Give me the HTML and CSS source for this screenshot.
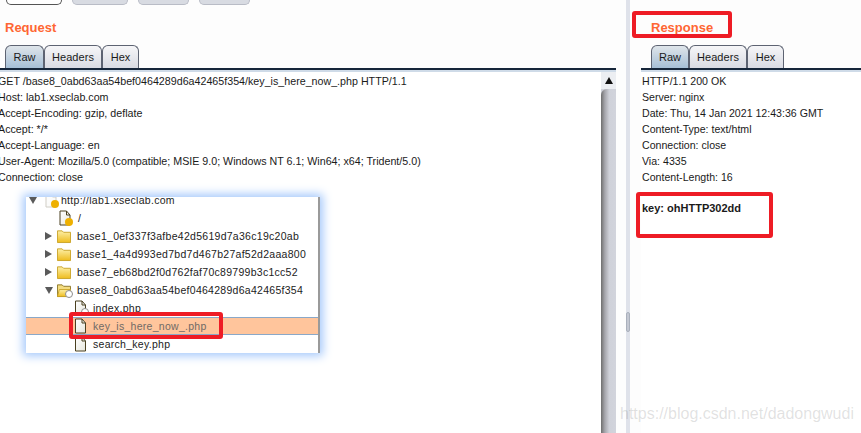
FILE: index.html
```html
<!DOCTYPE html>
<html lang="en">
<head>
<meta charset="utf-8">
<title>Request and Response</title>
<link rel="stylesheet" href="styles.css">
</head>
<body>
<svg class="defs" width="0" height="0" aria-hidden="true">
  <defs>
    <linearGradient id="fold" x1="0" y1="0" x2="0" y2="1"><stop offset="0" stop-color="#fdf0a8"/><stop offset="1" stop-color="#eebc1e"/></linearGradient>
    <linearGradient id="paper" x1="0" y1="0" x2="1" y2="1"><stop offset="0" stop-color="#ffffff"/><stop offset="1" stop-color="#e6e6dc"/></linearGradient>
    <symbol id="doc" viewBox="0 0 13 16"><path d="M1.5 1H8l3.5 4v10h-10z" fill="url(#paper)" stroke="#4a4020"/><path d="M8 1v4h3.5" fill="none" stroke="#4a4020"/></symbol>
    <symbol id="folder" viewBox="0 0 15 16"><path d="M.5 2.5h5l1.5 1.5h7.5v11H.5z" fill="url(#fold)" stroke="#c9a227"/></symbol>
    <symbol id="folder-open" viewBox="0 0 15 16"><path d="M.5 2.5h5l1.5 1.5h7.5v11H.5z" fill="#f4dc80" stroke="#8a7526"/><path d="M2.5 7.5h12v7.5H.5z" fill="url(#fold)" stroke="#c9a227"/></symbol>
  </defs>
</svg>
<div class="page">
  <section class="left">
    <div class="toolbar">
      <span class="tool tool-on w56"></span><span class="tool w56"></span><span class="tool w51"></span><span class="tool w51"></span>
    </div>
    <h2 class="title">Request</h2>
    <div class="tabs">
      <span class="tab tab-on w39">Raw</span><span class="tab w58">Headers</span><span class="tab w37">Hex</span>
    </div>
    <div class="editor">
      <pre class="code code-left">GET /base8_0abd63aa54bef0464289d6a42465f354/key_is_here_now_.php HTTP/1.1
Host: lab1.xseclab.com
Accept-Encoding: gzip, deflate
Accept: */*
Accept-Language: en
User-Agent: Mozilla/5.0 (compatible; MSIE 9.0; Windows NT 6.1; Win64; x64; Trident/5.0)
Connection: close</pre>
      <div class="scrollbar">
        <div class="scroll-btn"><span class="scroll-arrow"></span></div>
        <div class="scroll-thumb"></div>
      </div>
    </div>
  </section>
  <div class="split"><span class="split-grip"></span></div>
  <section class="right">
    <h2 class="title title-right">Response</h2>
    <div class="tabs tabs-right">
      <span class="tab tab-on w38">Raw</span><span class="tab w58">Headers</span><span class="tab w37">Hex</span>
    </div>
    <div class="editor">
      <pre class="code code-right">HTTP/1.1 200 OK
Server: nginx
Date: Thu, 14 Jan 2021 12:43:36 GMT
Content-Type: text/html
Connection: close
Via: 4335
Content-Length: 16

<b>key: ohHTTP302dd</b></pre>
    </div>
  </section>
</div>

<div class="tree">
  <div class="tree-list">
    <div class="row d0"><span class="arrow-down"></span><span class="host-icon"><svg class="i-doc" aria-hidden="true"><use href="#doc"/></svg><span class="dot"></span></span><span class="label-host">http://lab1.xseclab.com</span></div>
    <div class="row d1-leaf"><span class="host-icon"><svg class="i-doc solid" aria-hidden="true"><use href="#doc"/></svg><span class="dot"></span></span><span class="label">/</span></div>
    <div class="row d1"><span class="arrow-right"></span><svg class="i-folder" aria-hidden="true"><use href="#folder"/></svg><span class="label">base1_0ef337f3afbe42d5619d7a36c19c20ab</span></div>
    <div class="row d1"><span class="arrow-right"></span><svg class="i-folder" aria-hidden="true"><use href="#folder"/></svg><span class="label">base1_4a4d993ed7bd7d467b27af52d2aaa800</span></div>
    <div class="row d1"><span class="arrow-right"></span><svg class="i-folder" aria-hidden="true"><use href="#folder"/></svg><span class="label">base7_eb68bd2f0d762faf70c89799b3c1cc52</span></div>
    <div class="row d1"><span class="arrow-down"></span><span class="host-icon"><svg class="i-folder" aria-hidden="true"><use href="#folder-open"/></svg><span class="ring"></span></span><span class="label">base8_0abd63aa54bef0464289d6a42465f354</span></div>
    <div class="row d2"><span class="host-icon host-leaf"><svg class="i-leaf" aria-hidden="true"><use href="#doc"/></svg><span class="ring ring-doc"></span></span><span class="label">index.php</span></div>
    <div class="row d2 row-sel"><svg class="i-leaf" aria-hidden="true"><use href="#doc"/></svg><span class="label">key_is_here_now_.php</span></div>
    <div class="row d2"><svg class="i-leaf" aria-hidden="true"><use href="#doc"/></svg><span class="label">search_key.php</span></div>
  </div>
  <div class="tree-bar"></div>
</div>

<div class="mark mark-response"></div>
<div class="mark mark-key"></div>
<div class="mark mark-file"></div>
<div class="watermark">https://blog.csdn.net/dadongwudi</div>
</body>
</html>
```
FILE: styles.css
```css
* { box-sizing: border-box; }
html, body { margin: 0; padding: 0; }
body {
  width: 861px;
  height: 433px;
  overflow: hidden;
  position: relative;
  background: #fdfdfd;
  font-family: "Liberation Sans", Arial, sans-serif;
  color: #1a1a1a;
}
.defs { position: absolute; }
.page { display: flex; height: 433px; }
.left { width: 616px; flex: none; display: flex; flex-direction: column; }
.right { flex: 1; min-width: 0; display: flex; flex-direction: column; margin-left: 11px; padding-top: 19px; }
.split { width: 4px; flex: none; margin-left: 10px; background: #dfe2ea; position: relative; }
.split-grip {
  position: absolute; left: 0; top: 312px; width: 4px; height: 20px;
  background: #c4c8d2; border: 1px solid #aab0bc; border-radius: 2px;
}
.toolbar { height: 19px; display: flex; align-items: flex-start; gap: 10px; padding-left: 6px; flex: none; }
.tool {
  height: 5px; background: #d8dbe2; border: 1px solid #b9bcc6; border-top: 0;
  border-radius: 0 0 5px 5px;
}
.tool-on { background: #fff; border-color: #555; }
.w56 { width: 56px; } .w51 { width: 51px; }
.title {
  margin: 0; height: 26px; padding-left: 5px; flex: none;
  font-size: 13px; line-height: 17px; font-weight: 700; color: #ff6633;
}
.title-right { padding-left: 10px; }
.tabs { display: flex; height: 23px; padding-left: 5px; flex: none; }
.tabs-right { padding-left: 10px; }
.tab {
  height: 23px; display: flex; align-items: center; justify-content: center;
  font-size: 11px; letter-spacing: .05px; padding-bottom: 1px;
  border: 1px solid #5d6372; border-bottom: 0; border-radius: 6px 6px 0 0;
  background: linear-gradient(#f6f6f8, #d9dbe3);
  color: #1a1a1a;
}
.tab-on { background: linear-gradient(#dfe5ea, #a6bfd6); }
.w39 { width: 39px; } .w38 { width: 38px; } .w58 { width: 58px; } .w37 { width: 37px; }
.editor {
  flex: 1; min-height: 0; display: flex; background: #fff;
  border-top: 2px solid #16263a;
  box-shadow: inset 0 2px 0 #cfdbe8;
}
.code {
  margin: 3px 0 0; flex: 1; min-width: 0;
  font-family: "Liberation Sans", Arial, sans-serif;
  font-size: 10.7px; line-height: 16px; color: #1a1a1a;
}
.code-left { margin-left: -2px; }
.code-right { margin-left: 1px; font-size: 10.6px; }
.code b { display: block; margin-top: -1px; font-size: 11px; }
.scrollbar { width: 15px; flex: none; margin-top: 2px; display: flex; flex-direction: column; background: #d0d2da; }
.scroll-btn { height: 17px; background: #eceef2; display: flex; align-items: center; justify-content: center; flex: none; }
.scroll-arrow { width: 0; height: 0; border: 4px solid transparent; border-top: 0; border-bottom: 7px solid #111; }
.scroll-thumb {
  flex: 1; border-radius: 6px 6px 0 0;
  background: linear-gradient(90deg, #6e6e6e, #a5a5ab 25%, #cfd1d9 55%, #d2d4dc);
}

.tree {
  position: absolute; left: 26px; top: 197px; width: 294px; height: 156px;
  display: flex; background: #fff; overflow: visible;
  box-shadow: 0 0 9px 3px #a6c9fb;
}
.tree-list { flex: 1; min-width: 0; height: 156px; overflow: hidden; }
.tree-bar { width: 2px; background: #9a9a9a; flex: none; }
.row {
  height: 18px; display: flex; align-items: center;
  font-size: 10.5px; letter-spacing: .28px; color: #222; white-space: nowrap;
}
.row:first-child { margin-top: -6px; }
.d0 { padding-left: 3px; }
.d1 { padding-left: 19px; }
.d1-leaf { padding-left: 32px; }
.d2 { padding-left: 48px; }
.row-sel { background: #ffc59c; border-top: 1px solid #8aa8c8; border-bottom: 1px solid #8aa8c8; color: #6f6a66; }
.arrow-down { width: 0; height: 0; border: 4px solid transparent; border-bottom: 0; border-top: 7px solid #5a5a5a; flex: none; }
.arrow-right { width: 0; height: 0; border: 4px solid transparent; border-right: 0; border-left: 7px solid #5a5a5a; margin-right: 5px; flex: none; }
.host-icon { position: relative; display: block; width: 14px; height: 16px; flex: none; }
.host-leaf { width: 13px; }
.d0 .host-icon { margin-left: 7px; margin-right: 3px; }
.d1 .arrow-down { margin-right: 4px; }
.i-doc { width: 14px; height: 16px; display: block; opacity: .25; }
.i-doc.solid { opacity: 1; }
.i-folder { width: 14px; height: 16px; display: block; flex: none; }
.i-leaf { width: 13px; height: 16px; display: block; flex: none; }
.dot {
  position: absolute; right: -1px; bottom: 0; width: 8px; height: 8px;
  border-radius: 50%; background: #eeb000;
}
.ring {
  position: absolute; right: -2px; bottom: 0; width: 8px; height: 8px;
  border-radius: 50%; background: #fff; border: 1.5px solid #8d8d8d;
}
.ring-doc { right: -2px; }
.label { margin-left: 6px; }
.label-host { letter-spacing: .28px; }

.mark { position: absolute; border: 4px solid #ee1c25; border-radius: 3px; }
.mark-response { left: 632px; top: 11px; width: 100px; height: 27px; }
.mark-key { left: 636px; top: 192px; width: 137px; height: 46px; }
.mark-file { left: 69px; top: 312px; width: 154px; height: 27px; }
.watermark {
  position: absolute; left: 620px; top: 404px;
  font-size: 16px; line-height: 20px; color: rgba(120, 120, 120, .22);
  white-space: nowrap;
}
```
